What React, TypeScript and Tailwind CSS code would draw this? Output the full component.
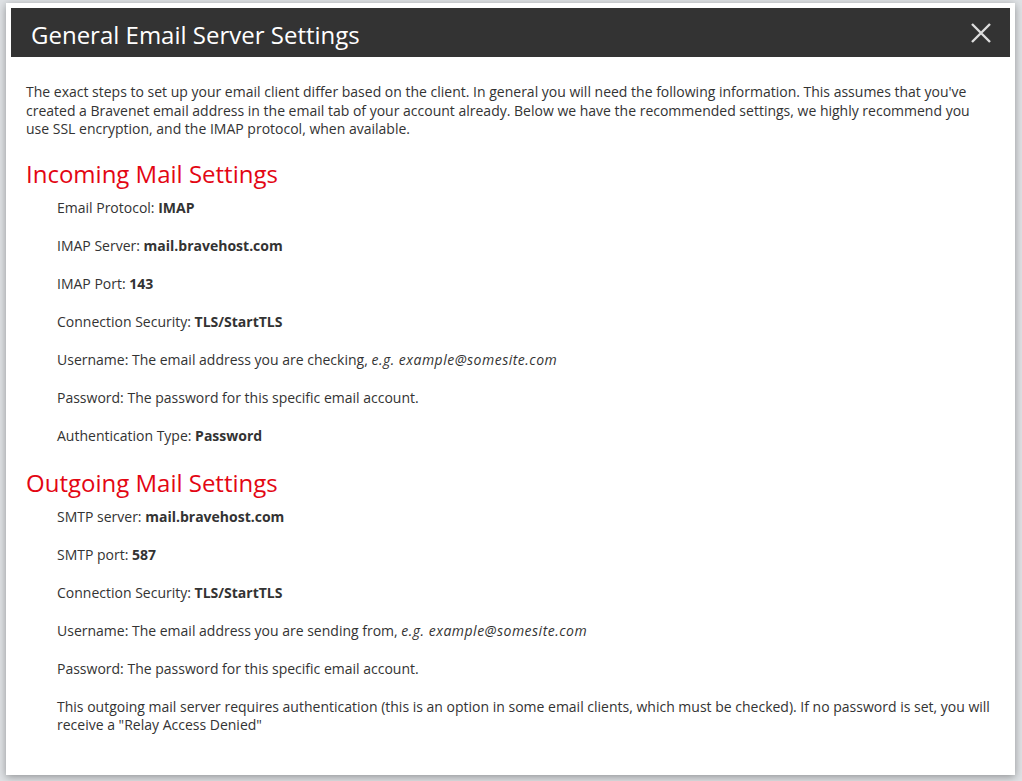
import React from "react";

const Item: React.FC<{ children: React.ReactNode; last?: boolean }> = ({ children, last }) => (
  <p className={`pl-[31px] leading-[18px] ${last ? "" : "mb-[20px]"}`}>{children}</p>
);

const Heading: React.FC<{ children: React.ReactNode }> = ({ children }) => (
  <h2 className="text-[24px] leading-[28px] text-[#e30613] mb-[11px]">{children}</h2>
);

const Example: React.FC<{ children: React.ReactNode }> = ({ children }) => (
  <i className="tracking-[0.5px]">{children}</i>
);

export default function App() {
  return (
    <div
      className="min-h-screen w-full bg-[#dfe2e5] pt-[3px] pl-[6px]"
      style={{ fontFamily: '"Open Sans", "Liberation Sans", sans-serif' }}
    >
      <div className="w-[1009px] h-[772px] bg-white p-[5px] shadow-[0_2px_8px_rgba(0,0,0,0.35)]">
        {/* HEADER */}
        <div className="flex items-center justify-between h-[49px] bg-[#333333] pl-[20px] pr-[19px]">
          <h1 className="text-[24px] leading-none text-white pt-[4px]">General Email Server Settings</h1>
          <svg width="20" height="20" viewBox="0 0 20 20" className="text-[#dddddd]">
            <path d="M1 1 L19 19 M19 1 L1 19" stroke="currentColor" strokeWidth="2.4" />
          </svg>
        </div>

        {/* CONTENT */}
        <div className="px-[15px] pt-[26px] text-[14px] text-[#333333]">
          <p className="leading-[18.5px] mb-[21px]">
            The exact steps to set up your email client differ based on the client. In general you will need the
            following information. This assumes that you've created a Bravenet email address in the email tab of your
            account already. Below we have the recommended settings, we highly recommend you use SSL encryption, and
            the IMAP protocol, when available.
          </p>

          <Heading>Incoming Mail Settings</Heading>
          <Item>
            Email Protocol: <b>IMAP</b>
          </Item>
          <Item>
            IMAP Server: <b>mail.bravehost.com</b>
          </Item>
          <Item>
            IMAP Port: <b>143</b>
          </Item>
          <Item>
            Connection Security: <b>TLS/StartTLS</b>
          </Item>
          <Item>
            Username: The email address you are checking, <Example>e.g. example@somesite.com</Example>
          </Item>
          <Item>Password: The password for this specific email account.</Item>
          <div className="mb-[24px]">
            <Item last>
              Authentication Type: <b>Password</b>
            </Item>
          </div>

          <Heading>Outgoing Mail Settings</Heading>
          <Item>
            SMTP server: <b>mail.bravehost.com</b>
          </Item>
          <Item>
            SMTP port: <b>587</b>
          </Item>
          <Item>
            Connection Security: <b>TLS/StartTLS</b>
          </Item>
          <Item>
            Username: The email address you are sending from, <Example>e.g. example@somesite.com</Example>
          </Item>
          <Item>Password: The password for this specific email account.</Item>
          <Item last>
            This outgoing mail server requires authentication (this is an option in some email clients, which must be
            checked). If no password is set, you will receive a "Relay Access Denied"
          </Item>
        </div>
      </div>
    </div>
  );
}
